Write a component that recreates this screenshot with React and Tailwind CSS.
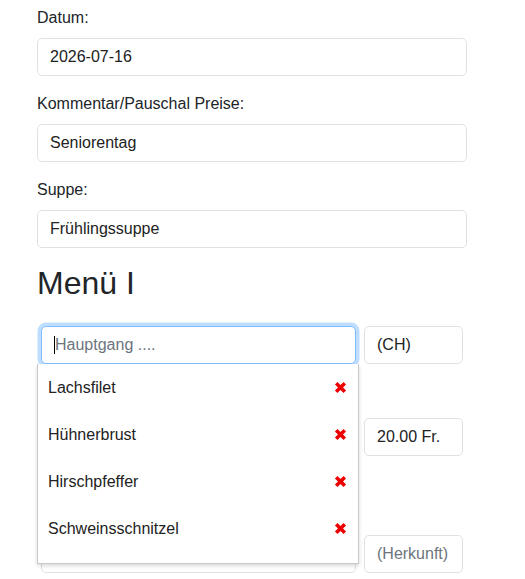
import React from 'react';

// --- Data ---
const fields = [
    { label: 'Datum:', value: '2026-07-16' },
    { label: 'Kommentar/Pauschal Preise:', value: 'Seniorentag' },
    { label: 'Suppe:', value: 'Frühlingssuppe' },
];

const suggestions = ['Lachsfilet', 'Hühnerbrust', 'Hirschpfeffer', 'Schweinsschnitzel'];

const inputCls = "block w-full h-[38px] px-3 rounded-[5px] border border-[#dee2e6] bg-white text-[16px] text-[#222] outline-none placeholder:text-[#6c757d]";

const CrossIcon = () => (
    <svg width="13" height="13" viewBox="0 0 13 13" className="shrink-0">
        <path d="M2.2 2.2 L10.8 10.8 M10.8 2.2 L2.2 10.8" stroke="#ee0000" strokeWidth="3.6" strokeLinecap="butt" />
    </svg>
);

const App = () => {
    return (
        <div className="min-h-[579px] bg-white pl-[37px] pt-[6px] text-[16px] leading-6 text-[#212529]" style={{ fontFamily: '"Liberation Sans", Arial, sans-serif' }}>
            <div className="w-[430px]">
                {/* Top fields */}
                {fields.map(f => (
                    <div key={f.label} className="mb-4">
                        <label className="block mb-2">{f.label}</label>
                        <input className={inputCls} defaultValue={f.value} readOnly />
                    </div>
                ))}

                <h2 className="text-[32px] leading-[1.2] font-medium mb-2">Menü I</h2>

                {/* Menu rows */}
                <div className="mt-6 flex flex-col">
                    <div className="flex">
                        <div className="relative w-[323px] px-1">
                            <div className="flex items-center h-[38px] px-3 rounded-[5px] border border-[#80bdff] bg-white shadow-[0_0_0_3.5px_rgba(0,123,255,0.25)] text-[#6c757d]">
                                <span className="w-px h-[18px] bg-black"></span>
                                <span>Hauptgang ....</span>
                            </div>

                            {/* Autocomplete dropdown */}
                            <div className="absolute z-10 left-0 top-[38px] w-[322px] bg-white border border-[#c8c8c8] border-t-0 shadow-[0_2px_4px_rgba(0,0,0,0.15)] pb-[11px]">
                                {suggestions.map(s => (
                                    <div key={s} className="flex items-center justify-between h-[47px] pl-[10px] pr-[11px] text-[#222]">
                                        <span>{s}</span>
                                        <CrossIcon />
                                    </div>
                                ))}
                            </div>
                        </div>
                        <div className="w-[107px] px-1">
                            <input className={inputCls} defaultValue="(CH)" readOnly />
                        </div>
                    </div>

                    <div className="flex mt-[54px]">
                        <div className="w-[323px] px-1">
                            <input className={inputCls} placeholder="Beilage ...." readOnly />
                        </div>
                        <div className="w-[107px] px-1">
                            <input className={inputCls} defaultValue="20.00 Fr." readOnly />
                        </div>
                    </div>

                    <div className="flex mt-[79px]">
                        <div className="w-[323px] px-1">
                            <input className={inputCls} placeholder="Vegi ...." readOnly />
                        </div>
                        <div className="w-[107px] px-1">
                            <input className={inputCls} placeholder="(Herkunft)" readOnly />
                        </div>
                    </div>
                </div>
            </div>
        </div>
    );
};

export default App;
